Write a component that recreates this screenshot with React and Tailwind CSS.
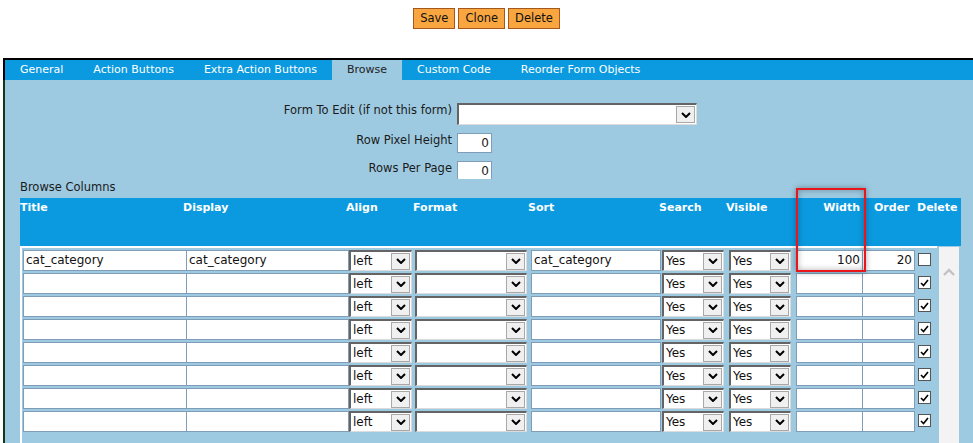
import React from 'react';

const tabs = ['General', 'Action Buttons', 'Extra Action Buttons', 'Browse', 'Custom Code', 'Reorder Form Objects'];

const rows = [
    { title: 'cat_category', display: 'cat_category', sort: 'cat_category', width: '100', order: '20', del: false },
    ...Array.from({ length: 7 }, () => ({ title: '', display: '', sort: '', width: '', order: '', del: true })),
];

const Chevron = () => (
    <svg width="10" height="6" viewBox="0 0 10 6" className="block">
        <polyline points="1,1 5,5 9,1" fill="none" stroke="#000" strokeWidth="2" />
    </svg>
);

// className must carry the height (h-[21px] etc.)
const Select = ({ value, className }) => (
    <div className={`flex shrink-0 items-center border-t-2 border-l-2 border-r border-b border-t-[#646464] border-l-[#646464] border-r-[#dcdcdc] border-b-[#dcdcdc] bg-white text-[12px] ${className}`}>
        <span className="flex-1 pl-[2px] leading-[17px]">{value}</span>
        <span className="mr-[1px] flex h-[17px] w-[19px] items-center justify-center border border-[#a8a8a8] bg-[#f0f0f0]">
            <Chevron />
        </span>
    </div>
);

const TextBox = ({ value, className }) => (
    <div className={`shrink-0 border-[#7f9db9] bg-white px-[2px] text-[12px] leading-[19px] ${className}`}>{value}</div>
);

const Checkbox = ({ checked }) => (
    <div className="ml-[3px] mt-[3px] flex h-[13px] w-[13px] shrink-0 items-center justify-center border border-[#555] bg-white">
        {checked && (
            <svg width="9" height="8" viewBox="0 0 9 8">
                <polyline points="1,4 3.5,6.5 8,1" fill="none" stroke="#000" strokeWidth="1.6" />
            </svg>
        )}
    </div>
);

const App = () => (
    <div className="relative h-[443px] w-[973px] overflow-hidden bg-white font-['DejaVu_Sans',sans-serif] text-[11.5px] text-[#111]">
        <div className="flex h-[58px] justify-center gap-[3px] pt-[8px]">
            {['Save', 'Clone', 'Delete'].map((b) => (
                <div key={b} className="h-[21px] border border-[#a5581c] bg-[#f9a640] px-[6px] leading-[19px] text-[#111]">{b}</div>
            ))}
        </div>

        <div className="ml-[3px] border-t-2 border-black">
            <div className="flex h-[20px] border-l-2 border-black bg-[#0b9ae0] text-[11px]">
                {tabs.map((t) => (
                    <div key={t} className={`px-[15px] leading-[20px] ${t === 'Browse' ? 'bg-[#9ecae1] text-[#222]' : 'text-white'}`}>{t}</div>
                ))}
            </div>

            <div className="h-[400px] border-l-2 border-[#0c3a16] bg-[#9ecae1] pt-[23px]">
                <div className="grid grid-cols-[447px_auto] items-start gap-x-[5px] text-[#1a1a1a]">
                    <div className="text-right leading-[14px]">Form To Edit (if not this form)</div>
                    <Select value="" className="h-[22px] w-[240px]" />
                    <div className="mt-[8px] text-right leading-[14px]">Row Pixel Height</div>
                    <TextBox value="0" className="mt-[8px] h-[20px] w-[35px] border text-right" />
                    <div className="mt-[8px] text-right leading-[14px]">Rows Per Page</div>
                    <TextBox value="0" className="mt-[8px] h-[18px] w-[35px] border border-b-0 text-right" />
                </div>

                <div className="ml-[15px] mt-[1px] leading-[14px] text-[#1a1a1a]">Browse Columns</div>

                <div className="ml-[15px] mt-[4px] flex h-[48px] w-[941px] bg-[#0b9ae0] pt-[3px] text-[11px] font-bold leading-[14px] text-white">
                    <div className="w-[163px]">Title</div>
                    <div className="w-[163px]">Display</div>
                    <div className="w-[67px]">Align</div>
                    <div className="w-[115px]">Format</div>
                    <div className="w-[131px]">Sort</div>
                    <div className="w-[67px]">Search</div>
                    <div className="w-[70px]">Visible</div>
                    <div className="w-[66px] pr-[2px] text-right">Width</div>
                    <div className="ml-[12px] w-[43px]">Order</div>
                    <div>Delete</div>
                </div>

                <div className="ml-[15px] flex">
                    <div className="flex w-[917px] flex-col gap-[2px] border-t-2 border-l-2 border-white pl-[1px] pt-[2px]">
                        {rows.map((r, i) => (
                            <div key={i} className="flex">
                                <TextBox value={r.title} className="h-[21px] w-[163px] border border-r-0" />
                                <TextBox value={r.display} className="h-[21px] w-[163px] border" />
                                <Select value="left" className="h-[21px] w-[63px]" />
                                <Select value="" className="ml-[3px] h-[21px] w-[112px]" />
                                <TextBox value={r.sort} className="ml-[4px] h-[21px] w-[130px] border" />
                                <Select value="Yes" className="ml-[1px] h-[21px] w-[62px]" />
                                <Select value="Yes" className="ml-[5px] h-[21px] w-[62px]" />
                                <TextBox value={r.width} className="ml-[5px] h-[21px] w-[67px] border text-right" />
                                <TextBox value={r.order} className="h-[21px] w-[52px] border border-l-0 text-right" />
                                <Checkbox checked={r.del} />
                            </div>
                        ))}
                    </div>
                    <div className="ml-[2px] mt-[1px] flex h-[200px] w-[20px] justify-center bg-[#f3f3f3] pt-[21px]">
                        <svg width="12" height="8" viewBox="0 0 12 8">
                            <polyline points="1,7 6,2 11,7" fill="none" stroke="#c2c2c2" strokeWidth="2.4" />
                        </svg>
                    </div>
                </div>
            </div>
        </div>

        <div className="absolute left-[796px] top-[188px] h-[84px] w-[70px] border-2 border-[#e8161c] shadow-[0_0_6px_rgba(0,0,0,0.35),inset_0_0_6px_rgba(0,0,0,0.3)]" />
    </div>
);

export default App;
